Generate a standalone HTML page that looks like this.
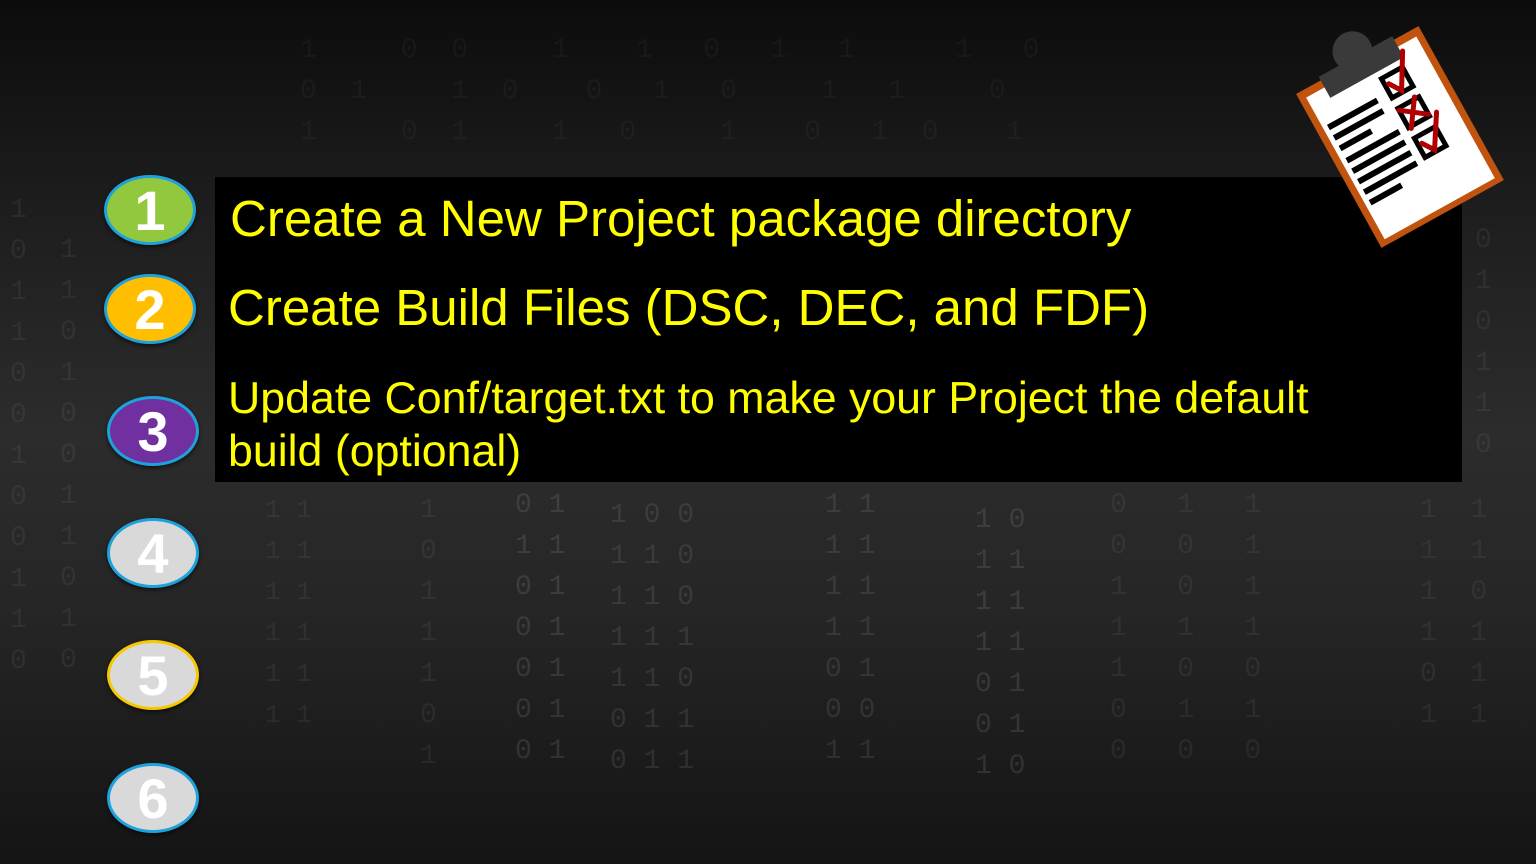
<!DOCTYPE html>
<html><head><style>
html,body{margin:0;padding:0}
body{width:1536px;height:864px;overflow:hidden;position:relative;font-family:"Liberation Sans",sans-serif;
background:linear-gradient(180deg,#0c0c0c 0%,#1e1e1e 25%,#2c2c2c 50%,#262626 70%,#141414 100%);}
.bin{position:absolute;font-family:"Liberation Mono",monospace;font-size:28px;line-height:41px;color:rgba(255,255,255,0.06);white-space:pre;}
.ov{position:absolute;width:92px;height:70px;border-radius:50%;border:3px solid #1ea2dc;box-sizing:border-box;color:#fff;font-weight:bold;font-size:56px;text-align:center;line-height:66px;box-shadow:0 2px 4px rgba(0,0,0,.6)}
.box{position:absolute;left:215px;top:177px;width:1247px;height:305px;background:#000}
.t{position:absolute;color:#ffff00;white-space:nowrap}
</style></head><body>
<div class="bin" style="left:10px;top:190px">1
0
1
1
0
0
1
0
0
1
1
0</div>
<div class="bin" style="left:60px;top:230px">1
1
0
1
0
0
1
1
0
1
0</div>
<div class="bin" style="left:265px;top:490px;font-size:26px">1 1
1 1
1 1
1 1
1 1
1 1</div>
<div class="bin" style="left:420px;top:490px">1
0
1
1
1
0
1</div>
<div class="bin" style="left:515px;top:485px;color:rgba(255,255,255,0.1)">0 1
1 1
0 1
0 1
0 1
0 1
0 1</div>
<div class="bin" style="left:610px;top:495px;color:rgba(255,255,255,0.09)">1 0 0
1 1 0
1 1 0
1 1 1
1 1 0
0 1 1
0 1 1</div>
<div class="bin" style="left:825px;top:485px;color:rgba(255,255,255,0.09)">1 1
1 1
1 1
1 1
0 1
0 0
1 1</div>
<div class="bin" style="left:975px;top:500px;color:rgba(255,255,255,0.1)">1 0
1 1
1 1
1 1
0 1
0 1
1 0</div>
<div class="bin" style="left:1110px;top:485px">0   1   1
0   0   1
1   0   1
1   1   1
1   0   0
0   1   1
0   0   0</div>
<div class="bin" style="left:1420px;top:490px">1  1
1  1
1  0
1  1
0  1
1  1</div>
<div class="bin" style="left:1475px;top:220px">0
1
0
1
1
0</div>
<div class="bin" style="left:300px;top:30px;color:rgba(255,255,255,0.035)">1     0  0     1    1   0   1   1      1   0
0  1     1  0    0   1   0     1   1     0
1     0  1     1   0     1    0   1  0    1</div>

<div class="box"></div>
<div class="t" style="left:230px;top:189px;font-size:51px">Create a New Project package directory</div>
<div class="t" style="left:228px;top:278px;font-size:51px">Create Build Files (DSC, DEC, and FDF)</div>
<div class="t" style="left:228px;top:372px;font-size:44.7px;line-height:53px">Update Conf/target.txt to make your Project the default<br>build (optional)</div>

<div class="ov" style="left:104px;top:175px;background:#92c83e">1</div>
<div class="ov" style="left:104px;top:274px;background:#ffbf00">2</div>
<div class="ov" style="left:107px;top:396px;background:#7030a0">3</div>
<div class="ov" style="left:107px;top:518px;background:#d9d9d9">4</div>
<div class="ov" style="left:107px;top:640px;background:#d9d9d9;border-color:#f5c800">5</div>
<div class="ov" style="left:107px;top:763px;background:#d9d9d9">6</div>

<svg style="position:absolute;left:0;top:0" width="1536" height="864">
<g transform="translate(1400,137) rotate(-29)">
<rect x="-70" y="-88" width="140" height="176" fill="#c0530e"/>
<rect x="-63" y="-80" width="126" height="162" fill="#fff"/>
<rect x="-42" y="-92" width="84" height="24" fill="#3a3a3a"/>
<circle cx="0" cy="-98" r="20" fill="#3a3a3a"/>
<g fill="#000">
<rect x="-58" y="-46" width="56" height="6"/><rect x="-58" y="-34" width="56" height="6"/>
<rect x="-58" y="-22" width="36" height="6"/><rect x="-58" y="-8" width="60" height="6"/>
<rect x="-58" y="4" width="60" height="6"/><rect x="-58" y="16" width="60" height="6"/>
<rect x="-58" y="28" width="60" height="6"/><rect x="-58" y="40" width="36" height="6"/>
</g>
<g fill="none" stroke="#000" stroke-width="5">
<rect x="12" y="-60" width="24" height="22"/><rect x="12" y="-26" width="24" height="22"/><rect x="12" y="8" width="24" height="22"/>
</g>
<g fill="none" stroke="#b00000" stroke-width="5" stroke-linecap="round">
<path d="M16,-52 L24,-40 L44,-74"/>
<path d="M12,-24 L36,-6 M32,-28 L14,-2"/>
<path d="M16,16 L24,28 L44,-4"/>
</g>
</g>
</svg>
</body></html>
